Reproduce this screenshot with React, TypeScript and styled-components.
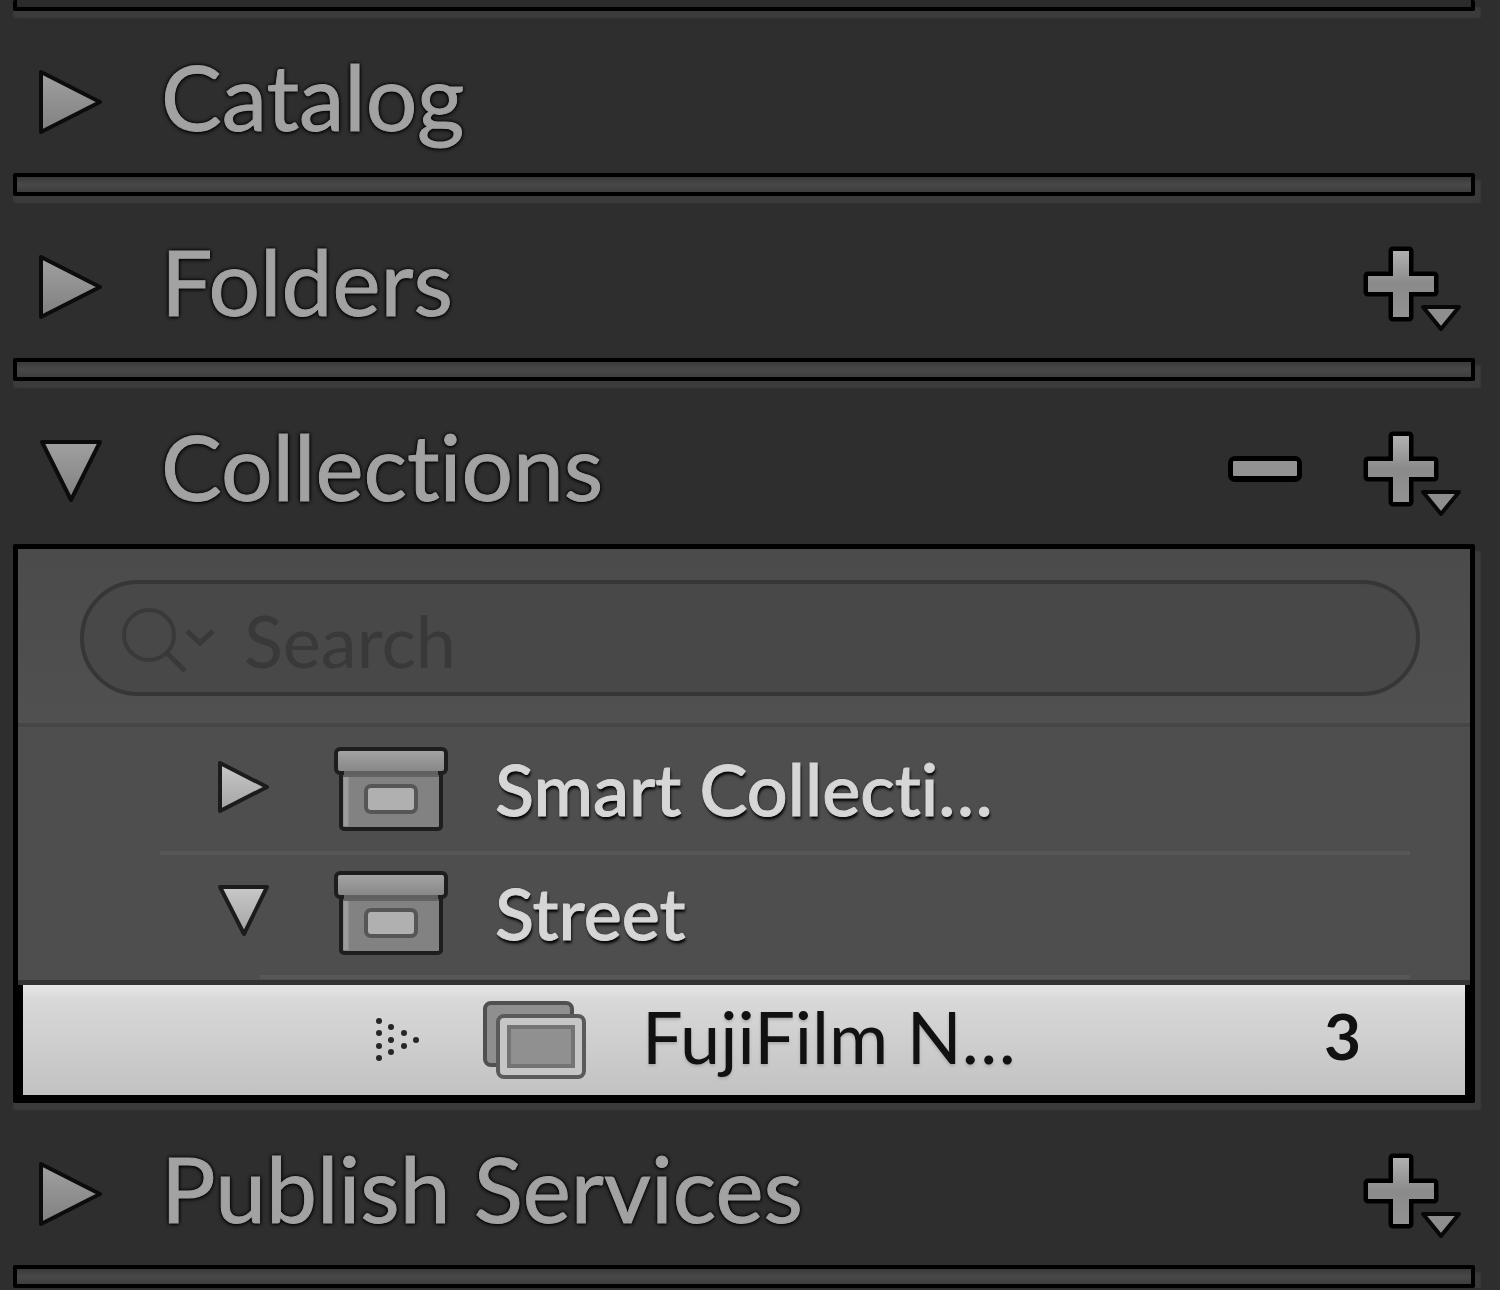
import React from "react";
import styled, { createGlobalStyle, css } from "styled-components";

const GlobalStyle = createGlobalStyle`
  *, *::before, *::after { box-sizing: border-box; }
  html { background: #2e2e2e; }
  body {
    margin: 0;
    overflow: hidden;
    background: #2e2e2e;
    font-family: Lato, "Open Sans", sans-serif;
    font-variant-ligatures: none;
  }
`;

const Sidebar = styled.aside`
  padding: 0 25px 0 13px;
`;

const edgeHighlight = css`
  box-shadow: 0 7px 2px #3b3b3b, 6px 7px 2px #3b3b3b;
`;

const Divider = styled.div<{ $cut?: boolean }>`
  height: ${(p) => (p.$cut ? 11 : 23)}px;
  border: 4px solid #000;
  border-top-width: ${(p) => (p.$cut ? 0 : 4)}px;
  border-radius: 2px;
  background: ${(p) => (p.$cut ? "#2b2b2b" : "linear-gradient(#3a3a3a, #484848 50%, #3e3e3e)")};
  ${edgeHighlight}
`;

const Header = styled.header`
  display: flex;
  align-items: center;
  height: 162px;
  padding: 20px 12px 0 22px;
`;

const PlainButton = styled.button`
  display: flex;
  flex: none;
  margin: 0;
  padding: 0;
  border: 0;
  background: none;
  font: inherit;
  color: inherit;
  cursor: pointer;
`;

const TitleButton = styled(PlainButton)`
  flex: 1;
  align-items: center;
  gap: 54px;
  text-align: left;
`;

const Title = styled.span`
  padding-bottom: 12px;
  font-size: 91px;
  line-height: 112px;
  font-weight: 400;
  color: #a2a2a2;
  white-space: nowrap;
  -webkit-text-stroke: 1px #a2a2a2;
  text-shadow: 0 0 3px #000, 0 0 4px #000, 0 1px 4px #000;
`;

const Actions = styled.div`
  display: flex;
  align-items: center;
  gap: 58px;
`;

const Panel = styled.div`
  margin-top: 1px;
  border: 5px solid #000;
  border-bottom-width: 8px;
  border-radius: 2px;
  background: #4e4e4e;
  ${edgeHighlight}
`;

const SearchArea = styled.div`
  padding: 31px 50px 27px 62px;
  border-bottom: 4px solid #464646;
  background: linear-gradient(#4b4b4b, #505050);
`;

const SearchField = styled.label`
  display: flex;
  align-items: center;
  gap: 28px;
  height: 116px;
  padding: 0 40px 0 36px;
  border: 4px solid #363636;
  border-radius: 58px;
  background: #484848;
`;

const SearchInput = styled.input`
  flex: 1;
  min-width: 0;
  padding: 4px 0 0;
  border: 0;
  outline: 0;
  background: none;
  font: 400 72px/80px Lato, "Open Sans", sans-serif;
  color: #c4c4c4;
  &::placeholder { color: #393939; opacity: 1; }
`;

const Tree = styled.ul`
  margin: 0;
  padding: 0;
  list-style: none;
`;

const Row = styled.div<{ $indent: number; $selected?: boolean }>`
  display: flex;
  align-items: center;
  height: ${(p) => (p.$selected ? 110 : 124)}px;
  border: solid #000;
  border-width: ${(p) => (p.$selected ? "0 5px" : "0")};
  padding-left: ${(p) => p.$indent}px;
  padding-right: 104px;
  color: ${(p) => (p.$selected ? "#111" : "#d6d6d6")};
  background: ${(p) => (p.$selected ? "linear-gradient(#e6e6e6, #d8d8d8 14%, #c2c2c2)" : "none")};
`;

const RowRule = styled.div<{ $indent: number }>`
  height: 4px;
  margin: 0 60px -4px ${(p) => p.$indent}px;
  background: #575757;
`;

const SelectionEdge = styled.div`
  height: 5px;
  margin-top: 5px;
  background: #333;
`;

const IconSlot = styled.span<{ $width: number }>`
  display: flex;
  flex: none;
  width: ${(p) => p.$width}px;
`;

const Label = styled.span<{ $selected?: boolean }>`
  flex: 1;
  padding-bottom: ${(p) => (p.$selected ? 8 : 2)}px;
  font-size: 72px;
  line-height: 80px;
  font-weight: ${(p) => (p.$selected ? 400 : 500)};
  white-space: nowrap;
  -webkit-text-stroke: ${(p) => (p.$selected ? 0 : 1)}px currentColor;
  text-shadow: ${(p) =>
    p.$selected ? "0 2px 3px #aaa" : "0 0 2px #222, 1px 3px 3px #000"};
`;

const Count = styled.span`
  padding-bottom: 8px;
  font-size: 64px;
  line-height: 80px;
  font-weight: 700;
`;

function HeaderArrow({ open }: { open?: boolean }) {
  return (
    <svg width="72" height="72" viewBox="0 0 72 72" aria-hidden="true">
      <defs>
        <linearGradient id="arrowFill" x1="0" y1="0" x2="0" y2="1">
          <stop offset="0" stopColor="#a0a0a0" />
          <stop offset="1" stopColor="#808080" />
        </linearGradient>
      </defs>
      <path
        d={open ? "M7 6 H65 L36 64 Z" : "M6 6 V66 L65 36 Z"}
        fill="url(#arrowFill)"
        stroke="#0c0c0c"
        strokeWidth="4"
        strokeLinejoin="round"
      />
    </svg>
  );
}

function RowArrow({ open }: { open?: boolean }) {
  return (
    <svg width="56" height="60" viewBox="0 0 56 60" aria-hidden="true">
      <defs>
        <linearGradient id="rowArrowFill" x1="0" y1="0" x2="0" y2="1">
          <stop offset="0" stopColor="#c8c8c8" />
          <stop offset="1" stopColor="#a4a4a4" />
        </linearGradient>
      </defs>
      <path
        d={open ? "M5 4 H52 L29 51 Z" : "M5 4 V52 L52 28 Z"}
        fill="url(#rowArrowFill)"
        stroke="#1c1c1c"
        strokeWidth="4"
        strokeLinejoin="round"
      />
    </svg>
  );
}

function PlusIcon() {
  return (
    <svg width="102" height="92" viewBox="0 0 102 92" aria-hidden="true">
      <defs>
        <linearGradient id="plusFill" x1="0" y1="0" x2="0" y2="1">
          <stop offset="0" stopColor="#b0b0b0" />
          <stop offset="0.5" stopColor="#8a8a8a" />
          <stop offset="1" stopColor="#929292" />
        </linearGradient>
      </defs>
      <path
        d="M32 10 H48 V35 H73 V51 H48 V76 H32 V51 H7 V35 H32 Z"
        fill="#000"
        stroke="#000"
        strokeWidth="9"
        strokeLinejoin="round"
      />
      <path d="M32 10 H48 V35 H73 V51 H48 V76 H32 V51 H7 V35 H32 Z" fill="url(#plusFill)" />
      <path d="M62 66 H98 L80 88 Z" fill="#8e8e8e" stroke="#080808" strokeWidth="4" strokeLinejoin="round" />
    </svg>
  );
}

function MinusIcon() {
  return (
    <svg width="76" height="92" viewBox="0 0 76 92" aria-hidden="true">
      <rect x="1" y="30" width="74" height="26" rx="7" fill="#000" />
      <rect x="6" y="35" width="64" height="15" rx="1" fill="#929292" />
    </svg>
  );
}

function BoxIcon() {
  return (
    <svg width="116" height="88" viewBox="0 0 116 88" aria-hidden="true">
      <defs>
        <linearGradient id="lidFill" x1="0" y1="0" x2="0" y2="1">
          <stop offset="0" stopColor="#a6a6a6" />
          <stop offset="1" stopColor="#858585" />
        </linearGradient>
      </defs>
      <rect x="8" y="24" width="100" height="60" rx="3" fill="#828282" stroke="#1e1e1e" strokeWidth="4" />
      <path d="M13 31 V81" stroke="#9c9c9c" strokeWidth="5" />
      <path d="M10 30 H106" stroke="#636363" strokeWidth="4" />
      <rect x="3" y="4" width="110" height="24" rx="4" fill="url(#lidFill)" stroke="#1e1e1e" strokeWidth="4" />
      <path d="M11 28 H105" stroke="#606060" strokeWidth="4" />
      <rect x="33" y="41" width="50" height="26" rx="5" fill="#b0b0b0" stroke="#565656" strokeWidth="4" />
    </svg>
  );
}

function DottedArrow() {
  const dots = [
    [6, 4], [6, 16], [6, 29], [6, 41],
    [18, 10], [18, 23], [18, 35],
    [31, 16], [31, 29],
    [43, 23],
  ];
  return (
    <svg width="48" height="46" viewBox="0 0 48 46" aria-hidden="true">
      {dots.map(([x, y]) => (
        <circle key={`${x}-${y}`} cx={x} cy={y} r="3" fill="#262626" />
      ))}
    </svg>
  );
}

function CollectionIcon() {
  return (
    <svg width="106" height="82" viewBox="0 0 106 82" aria-hidden="true">
      <rect x="4" y="4" width="87" height="62" rx="6" fill="#8f8f8f" stroke="#505050" strokeWidth="4" />
      <rect x="17" y="17" width="86" height="61" rx="6" fill="#c6c6c6" stroke="#5a5a5a" strokeWidth="4" />
      <rect x="28" y="28" width="64" height="39" fill="#909090" stroke="#747474" strokeWidth="4" />
    </svg>
  );
}

function SearchIcon() {
  return (
    <svg width="96" height="72" viewBox="0 0 96 72" fill="none" stroke="#393939" strokeWidth="4" aria-hidden="true">
      <circle cx="29" cy="33" r="25" />
      <path d="M47 51 L65 69" strokeWidth="5" />
      <path d="M67 29 L80 41 L93 29" strokeWidth="5" />
    </svg>
  );
}

type SectionHeaderProps = { title: string; open?: boolean; add?: boolean; remove?: boolean };

function SectionHeader({ title, open, add, remove }: SectionHeaderProps) {
  return (
    <Header>
      <TitleButton type="button" aria-expanded={!!open}>
        <HeaderArrow open={open} />
        <Title>{title}</Title>
      </TitleButton>
      <Actions>
        {remove && (
          <PlainButton type="button" aria-label="Remove">
            <MinusIcon />
          </PlainButton>
        )}
        {add && (
          <PlainButton type="button" aria-label="Add">
            <PlusIcon />
          </PlainButton>
        )}
      </Actions>
    </Header>
  );
}

function SetRow({ name, open }: { name: string; open?: boolean }) {
  return (
    <Row $indent={197}>
      <IconSlot $width={118}>
        <PlainButton type="button" aria-label={name} aria-expanded={!!open}>
          <RowArrow open={open} />
        </PlainButton>
      </IconSlot>
      <IconSlot $width={162}>
        <BoxIcon />
      </IconSlot>
      <Label>{name}</Label>
    </Row>
  );
}

export default function App() {
  return (
    <>
      <GlobalStyle />
      <Sidebar>
        <Divider $cut />
        <SectionHeader title="Catalog" />
        <Divider />
        <SectionHeader title="Folders" add />
        <Divider />
        <SectionHeader title="Collections" open add remove />
        <Panel>
          <SearchArea>
            <SearchField>
              <SearchIcon />
              <SearchInput type="search" placeholder="Search" aria-label="Search" />
            </SearchField>
          </SearchArea>
          <Tree>
            <li>
              <SetRow name="Smart Collecti…" />
              <RowRule $indent={142} />
            </li>
            <li>
              <SetRow name="Street" open />
              <RowRule $indent={242} />
              <SelectionEdge />
              <Tree>
                <li>
                  <Row $indent={350} $selected>
                    <IconSlot $width={108}>
                      <DottedArrow />
                    </IconSlot>
                    <IconSlot $width={161}>
                      <CollectionIcon />
                    </IconSlot>
                    <Label $selected>FujiFilm N…</Label>
                    <Count>3</Count>
                  </Row>
                </li>
              </Tree>
            </li>
          </Tree>
        </Panel>
        <SectionHeader title="Publish Services" add />
        <Divider />
      </Sidebar>
    </>
  );
}
